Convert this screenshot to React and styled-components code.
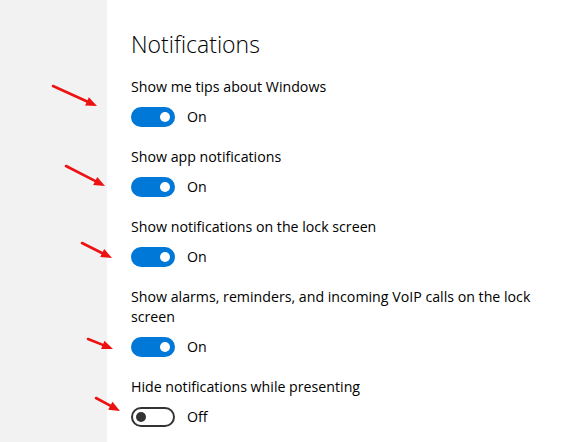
import React from "react";
import styled, { createGlobalStyle } from "styled-components";

const Global = createGlobalStyle`
  html, body { margin: 0; padding: 0; background: #ffffff; }
  body { font-family: "Open Sans", "Noto Sans", sans-serif; color: #000; }
`;

const Page = styled.div`
  position: relative;
  display: flex;
  width: 584px;
  height: 442px;
  overflow: hidden;
  background: #ffffff;
`;

const Sidebar = styled.div`
  width: 107px;
  flex: none;
  background: #f2f2f2;
`;

const Main = styled.main`
  flex: 1;
  padding: 29px 0 0 24px;
  display: flex;
  flex-direction: column;
`;

const Heading = styled.h1`
  margin: 0 0 18px 0;
  font-size: 23px;
  line-height: 30px;
  font-weight: 300;
  color: #000;
`;

const Group = styled.section`
  display: flex;
  flex-direction: column;
  gap: 10px;
  margin-bottom: 20px;
`;

const Label = styled.div`
  font-size: 14.2px;
  line-height: 20px;
  max-width: 420px;
`;

const Row = styled.div`
  display: flex;
  align-items: center;
  gap: 12px;
  height: 20px;
`;

const Track = styled.div`
  box-sizing: border-box;
  width: 44px;
  height: 20px;
  border-radius: 10px;
  position: relative;
  background: ${(p) => (p.$on ? "#0078d7" : "#ffffff")};
  border: 2px solid ${(p) => (p.$on ? "#0078d7" : "#333333")};
`;

const Knob = styled.span`
  position: absolute;
  top: 3px;
  left: ${(p) => (p.$on ? "27px" : "3px")};
  width: 10px;
  height: 10px;
  border-radius: 50%;
  background: ${(p) => (p.$on ? "#ffffff" : "#333333")};
`;

const State = styled.span`
  font-size: 14.2px;
  line-height: 20px;
`;

const Overlay = styled.svg`
  position: absolute;
  left: 0;
  top: 0;
  pointer-events: none;
`;

const items = [
  { label: "Show me tips about Windows", on: true },
  { label: "Show app notifications", on: true },
  { label: "Show notifications on the lock screen", on: true },
  { label: "Show alarms, reminders, and incoming VoIP calls on the lock screen", on: true },
  { label: "Hide notifications while presenting", on: false },
];

const arrows = [
  [53, 86, 97, 106],
  [66, 166, 105, 186],
  [82, 243, 112, 258],
  [88, 339, 113, 349],
  [96, 398, 120, 411],
];

function Arrow({ x1, y1, x2, y2 }) {
  const dx = x2 - x1;
  const dy = y2 - y1;
  const len = Math.hypot(dx, dy);
  const ux = dx / len;
  const uy = dy / len;
  const hl = 11;
  const hw = 4.5;
  const bx = x2 - ux * hl;
  const by = y2 - uy * hl;
  const pts = `${x2},${y2} ${bx - uy * hw},${by + ux * hw} ${bx + uy * hw},${by - ux * hw}`;
  return (
    <g>
      <line x1={x1} y1={y1} x2={bx + ux * 2} y2={by + uy * 2} stroke="#ee1111" strokeWidth="2.6" strokeLinecap="round" />
      <polygon points={pts} fill="#ee1111" />
    </g>
  );
}

export default function App() {
  return (
    <>
      <Global />
      <Page>
        <Sidebar />
        <Main>
          <Heading>Notifications</Heading>
          {items.map((it) => (
            <Group key={it.label}>
              <Label>{it.label}</Label>
              <Row>
                <Track $on={it.on}>
                  <Knob $on={it.on} />
                </Track>
                <State>{it.on ? "On" : "Off"}</State>
              </Row>
            </Group>
          ))}
        </Main>
        <Overlay width="584" height="442" viewBox="0 0 584 442">
          {arrows.map(([a, b, c, d], i) => (
            <Arrow key={i} x1={a} y1={b} x2={c} y2={d} />
          ))}
        </Overlay>
      </Page>
    </>
  );
}
